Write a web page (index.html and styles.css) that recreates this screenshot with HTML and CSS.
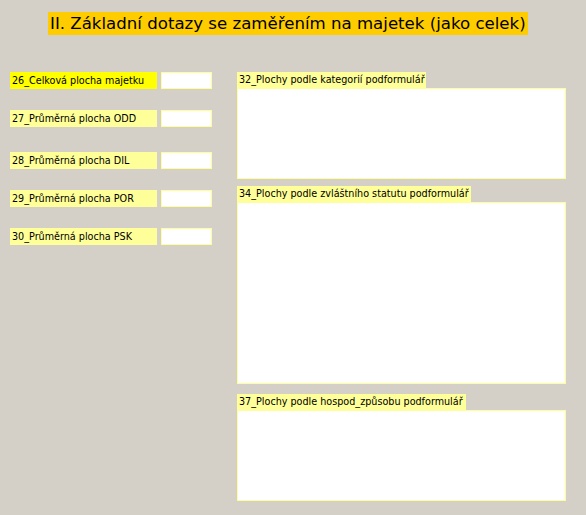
FILE: index.html
```html
<!DOCTYPE html>
<html lang="cs">
<head>
<meta charset="utf-8">
<title>Základní dotazy</title>
<link rel="stylesheet" href="styles.css">
</head>
<body>
<div class="header">
  <h1 class="title">II. Základní dotazy se zaměřením na majetek (jako celek)</h1>
</div>
<div class="main">
  <div class="left">
    <div class="row"><div class="label label-active">26_Celková plocha majetku</div><div class="input"></div></div>
    <div class="row r2"><div class="label">27_Průměrná plocha ODD</div><div class="input"></div></div>
    <div class="row r3"><div class="label">28_Průměrná plocha DIL</div><div class="input"></div></div>
    <div class="row r4"><div class="label">29_Průměrná plocha POR</div><div class="input"></div></div>
    <div class="row r4"><div class="label">30_Průměrná plocha PSK</div><div class="input"></div></div>
  </div>
  <div class="right">
    <div class="sub">
      <div class="sub-label w32">32_Plochy podle kategorií podformulář</div>
      <div class="sub-box h-small"></div>
    </div>
    <div class="sub s2">
      <div class="sub-label w34">34_Plochy podle zvláštního statutu podformulář</div>
      <div class="sub-box h-large"></div>
    </div>
    <div class="sub s3">
      <div class="sub-label w37">37_Plochy podle hospod_způsobu podformulář</div>
      <div class="sub-box h-small"></div>
    </div>
  </div>
</div>
</body>
</html>
```
FILE: styles.css
```css
html, body {
  margin: 0;
  padding: 0;
  background: #d4d0c8;
  font-family: "DejaVu Sans", Verdana, sans-serif;
  color: #000;
}
.header {
  padding: 12px 0 0 48px;
  height: 23px;
}
.title {
  display: inline-block;
  margin: 0;
  height: 23px;
  width: 480px;
  box-sizing: border-box;
  padding-left: 2px;
  background: #ffcc00;
  font-weight: normal;
  font-size: 16.6px;
  line-height: 23px;
  white-space: nowrap;
}
.main {
  display: flex;
  padding: 37px 0 0 10px;
}
.left {
  width: 227px;
}
.row {
  display: flex;
  gap: 4px;
  height: 17px;
}
.r2 { margin-top: 21px; }
.r3 { margin-top: 25px; }
.r4 { margin-top: 21px; }
.label,
.sub-label {
  font-family: "DejaVu Sans Condensed", "DejaVu Sans", sans-serif;
  font-size: 10.7px;
  padding-left: 2px;
  box-sizing: border-box;
  white-space: nowrap;
  overflow: hidden;
  background: #ffff99;
}
.label {
  width: 147px;
  height: 17px;
  line-height: 17px;
}
.label-active {
  background: #ffff00;
}
.input {
  width: 51px;
  height: 17px;
  box-sizing: border-box;
  background: #fff;
  border: 1px solid #ffff99;
}
.right {
  width: 329px;
}
.sub-label {
  height: 16px;
  line-height: 16px;
}
.w32 { width: 189px; }
.w34 { width: 234px; }
.w37 { width: 229px; }
.sub-box {
  background: #fff;
  border: 1px solid #ffff99;
  box-sizing: border-box;
}
.h-small { height: 91px; }
.h-large { height: 182px; }
.s2 { margin-top: 7px; }
.s3 { margin-top: 10px; }
```
